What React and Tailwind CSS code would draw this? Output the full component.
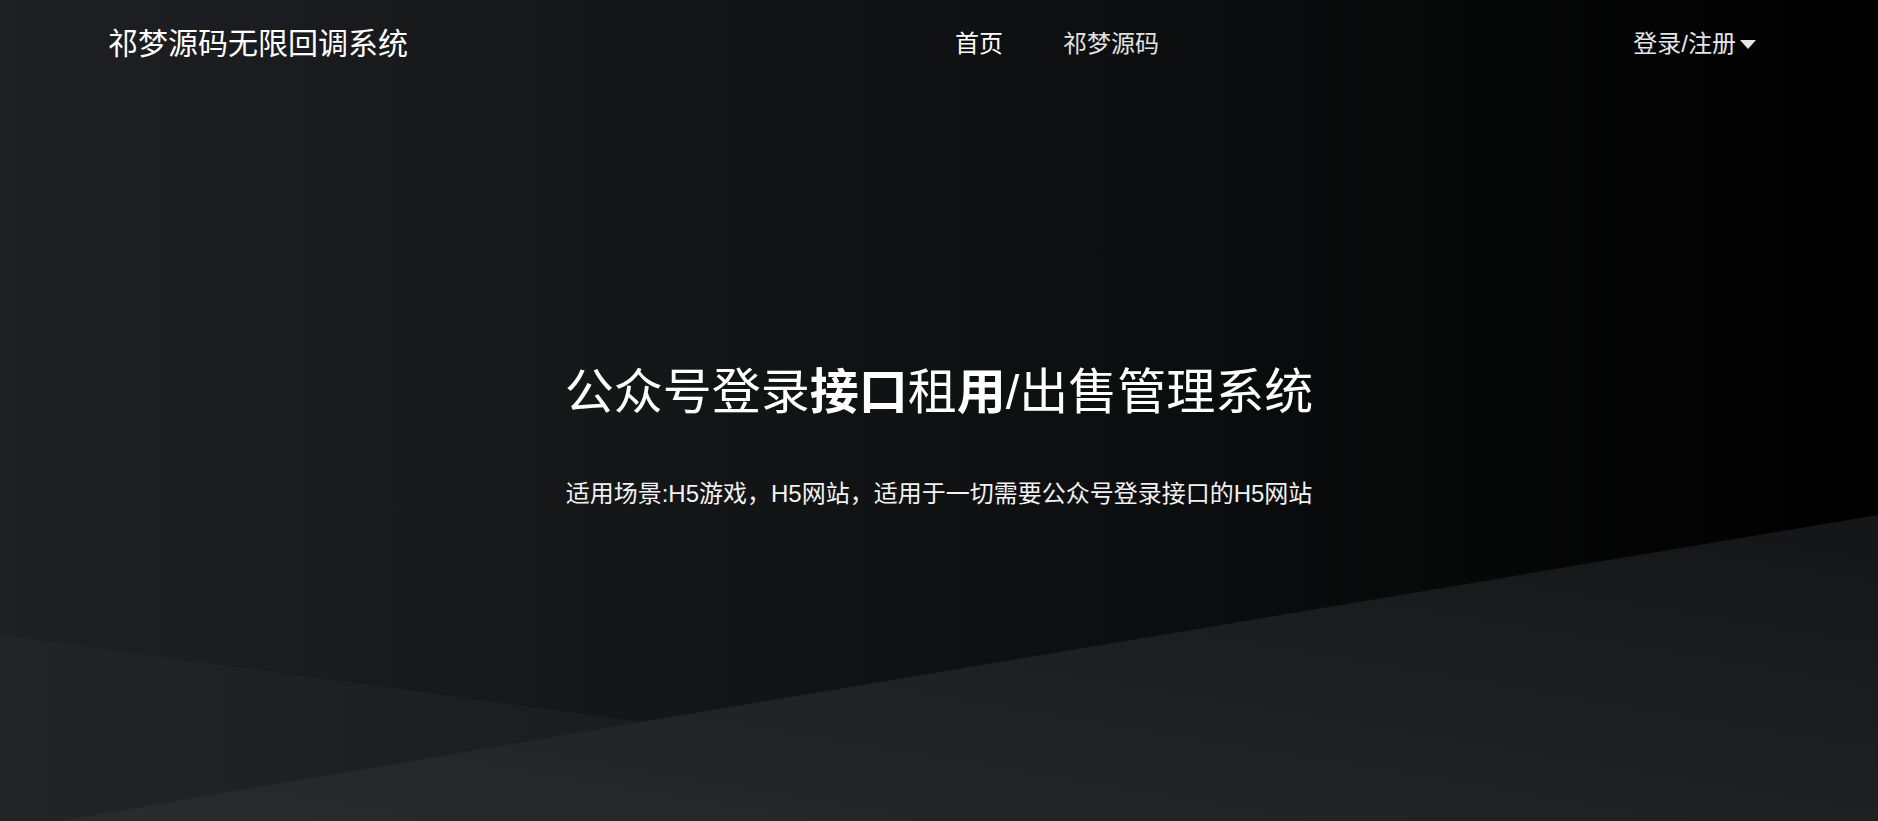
export default function App() {
  return (
    <div className="relative min-h-screen h-[821px] overflow-hidden bg-[linear-gradient(to_right,#1f2023,#0d0e0f_60%,#000)] font-['Liberation_Sans','Noto_Sans_CJK_SC',sans-serif] text-white">
      {/* background shapes */}
      <svg className="absolute inset-0 w-full h-full" viewBox="0 0 1878 821" preserveAspectRatio="none">
        <defs>
          <linearGradient id="leftTri" x1="0" y1="0" x2="1" y2="0">
            <stop offset="0" stopColor="#232426" />
            <stop offset="1" stopColor="#1b1c1e" />
          </linearGradient>
          <linearGradient id="bigShape" x1="0" y1="1" x2="1" y2="0">
            <stop offset="0" stopColor="#2a2b2d" />
            <stop offset="0.5" stopColor="#1f2022" />
            <stop offset="1" stopColor="#141516" />
          </linearGradient>
        </defs>
        <polygon points="0,635 641,722 0,1085" fill="url(#leftTri)" />
        <polygon points="1878,515 1878,821 60,821 641,722" fill="url(#bigShape)" />
      </svg>

      <div className="relative">
        <header className="h-[88px] flex items-center pl-[108px] pr-[122px]">
          <div className="w-[847px] text-[30px] leading-none">祁梦源码无限回调系统</div>
          <nav className="flex items-center gap-[60px] text-[24px] leading-none">
            <a className="text-white">首页</a>
            <a className="text-[#e2e2e2]">祁梦源码</a>
          </nav>
          <div className="ml-auto flex items-center gap-[4px] text-[24px] leading-none text-[#e6e6e6]">
            <span>登录/注册</span>
            <span className="w-0 h-0 border-l-[8px] border-r-[8px] border-t-[9px] border-l-transparent border-r-transparent border-t-[#e6e6e6]" />
          </div>
        </header>

        <section className="flex flex-col items-center">
          <h1 className="mt-[272px] text-[49px] leading-[64px] font-normal">
            公众号登录<b className="font-bold">接口</b>租<b className="font-bold">用</b>/出售管理系统
          </h1>
          <p className="mt-[54px] text-[24px] leading-[32px] text-[#f2f2f2]">
            适用场景:H5游戏，H5网站，适用于一切需要公众号登录接口的H5网站
          </p>
        </section>
      </div>
    </div>
  );
}
